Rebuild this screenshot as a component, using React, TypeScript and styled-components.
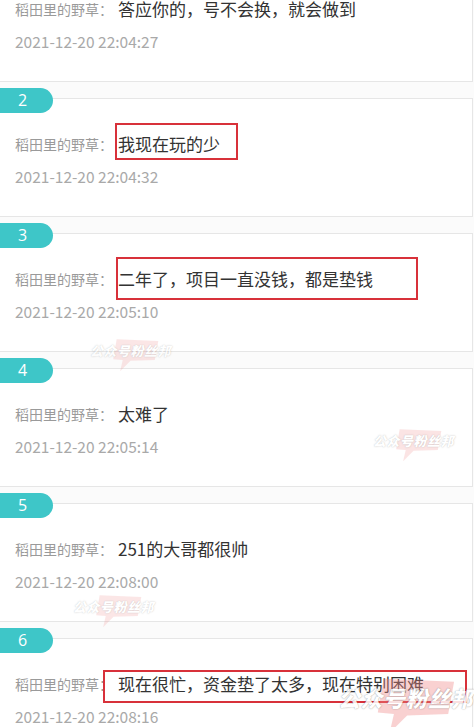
import * as React from 'react'

import styled, { createGlobalStyle } from 'styled-components'

interface Mark {
  top: number
  right: number
  bottom: number
  left: number
}

interface Reply {
  no: number
  text: string
  time: string
  mark?: Mark
}

const AUTHOR = '稻田里的野草：'

const replies: Reply[] = [
  { no: 1, text: '答应你的，号不会换，就会做到', time: '2021-12-20 22:04:27' },
  {
    no: 2,
    text: '我现在玩的少',
    time: '2021-12-20 22:04:32',
    mark: { top: -6, right: -18, bottom: -1, left: -3 },
  },
  {
    no: 3,
    text: '二年了，项目一直没钱，都是垫钱',
    time: '2021-12-20 22:05:10',
    mark: { top: -7, right: -45, bottom: -6, left: -2 },
  },
  { no: 4, text: '太难了', time: '2021-12-20 22:05:14' },
  { no: 5, text: '251的大哥都很帅', time: '2021-12-20 22:08:00' },
  {
    no: 6,
    text: '现在很忙，资金垫了太多，现在特别困难',
    time: '2021-12-20 22:08:16',
    mark: { top: 1, right: -43, bottom: -4, left: -15 },
  },
]

// watermark stamps left on the screenshot
const stamps = [
  { x: 90, y: 334, size: 13, fade: 0.45 },
  { x: 373, y: 424, size: 13, fade: 0.5 },
  { x: 73, y: 590, size: 13, fade: 0.45 },
  { x: 338, y: 670, size: 22, fade: 0.85 },
]

const Stamp: React.FC<{ size: number; fade: number; x: number; y: number }> = ({ size, fade, x, y }) => (
  <StampBox style={{ left: x, top: y, opacity: fade }}>
    <Bubble viewBox="0 0 60 40" width={size * 4} height={size * 3.2} $size={size}>
      <path d="M10 2 L58 4 L54 26 L26 27 L14 39 L17 26 L6 25 Z" fill="#ef8a8a" opacity="0.45" />
    </Bubble>
    <StampText $size={size}>公众号粉丝邦</StampText>
  </StampBox>
)

const App: React.FC = () => (
  <>
    <GlobalStyle />
    <Page>
      <List>
        {replies.map((r) => (
          <Card key={r.no}>
            <Badge>{r.no}</Badge>
            <Line>
              <Author>{AUTHOR}</Author>
              <Content $mark={r.mark}>{r.text}</Content>
            </Line>
            <Time>{r.time}</Time>
          </Card>
        ))}
      </List>
      {stamps.map((s, i) => (
        <Stamp key={i} {...s} />
      ))}
    </Page>
  </>
)

export default App

const GlobalStyle = createGlobalStyle`
  html, body {
    margin: 0;
    padding: 0;
    background: #fbfbfb;
    overflow: hidden;
  }
  body {
    font-family: "Noto Sans CJK SC", "Noto Sans", sans-serif;
  }
`

const Page = styled.div`
  position: relative;
  width: 474px;
  height: 727px;
  overflow: hidden;
`

const List = styled.div`
  display: flex;
  flex-direction: column;
  gap: 16px;
  margin-top: -37px;
`

const Card = styled.div`
  background: #fff;
  border-top: 1px solid #e6e6e6;
  border-bottom: 1px solid #e6e6e6;
  border-right: 1px solid #e6e6e6;
  margin-right: 1px;
  height: 117px;
  box-sizing: content-box;
  padding-left: 15px;
`

const Badge = styled.div`
  width: 35px;
  height: 25px;
  margin: -11px 0 0 -15px;
  padding-left: 18px;
  background: #3ec6c8;
  border-radius: 0 13px 13px 0;
  color: #fff;
  font-size: 16px;
  line-height: 25px;
  font-family: "Open Sans", "Noto Sans", sans-serif;
`

const Line = styled.div`
  display: flex;
  align-items: center;
  margin-top: 16px;
  height: 30px;
  white-space: nowrap;
`

const Author = styled.span`
  font-size: 14px;
  color: #9a9a9a;
  margin-right: 5px;
`

const Content = styled.span<{ $mark?: Mark }>`
  position: relative;
  display: inline-block;
  font-size: 17px;
  line-height: 30px;
  color: #333;

  &::after {
    content: '';
    display: ${(p) => (p.$mark ? 'block' : 'none')};
    position: absolute;
    top: ${(p) => p.$mark?.top ?? 0}px;
    right: ${(p) => p.$mark?.right ?? 0}px;
    bottom: ${(p) => p.$mark?.bottom ?? 0}px;
    left: ${(p) => p.$mark?.left ?? 0}px;
    border: 2px solid #d8313a;
  }
`

const Time = styled.div`
  margin-top: 6px;
  font-size: 15.5px;
  line-height: 22px;
  color: #a9a9a9;
`

const StampBox = styled.div`
  position: absolute;
  pointer-events: none;
`

const Bubble = styled.svg<{ $size: number }>`
  position: absolute;
  left: ${(p) => p.$size * 1.4}px;
  top: 0;
`

const StampText = styled.div<{ $size: number }>`
  position: relative;
  margin-top: ${(p) => p.$size * 0.5}px;
  font-size: ${(p) => p.$size}px;
  font-weight: 900;
  font-style: italic;
  letter-spacing: 0.5px;
  color: #fff;
  white-space: nowrap;
  text-shadow: 0 0 1px rgba(0, 0, 0, 0.35), 0 0 2px rgba(0, 0, 0, 0.2);
`
